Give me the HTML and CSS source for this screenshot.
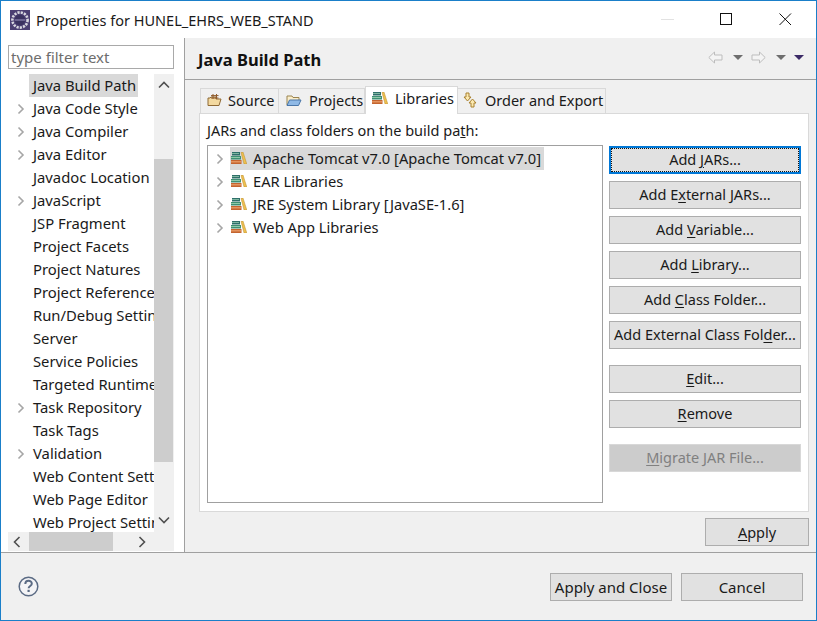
FILE: index.html
```html
<!DOCTYPE html>
<html lang="en">
<head>
    <meta charset="UTF-8">
    <title>Properties for HUNEL_EHRS_WEB_STAND</title>
    <link rel="stylesheet" href="styles.css">
</head>
<body>
    <svg class="defs" width="0" height="0">
        <symbol id="books" viewBox="0 0 16 12">
            <rect x="1" y="0" width="8" height="3.500" fill="#2f6f6a"/>
            <rect x="1" y="1" width="7" height="1" fill="#7fb7a0"/>
            <rect x="0" y="4" width="10" height="3.500" fill="#3f8f73"/>
            <rect x="0" y="5" width="9" height="1" fill="#8fc9a8"/>
            <rect x="0" y="8" width="10.500" height="4" fill="#c4642f"/>
            <rect x="0" y="9.200" width="10" height="1.200" fill="#eba06a"/>
            <path d="M10 .3L12 0 15.800 12H13z" fill="#eec04f" stroke="#b98a2c" stroke-width=".5"/>
        </symbol>
        <symbol id="chev" viewBox="0 0 8 12">
            <path d="M1.500 1.500 L6 6 L1.500 10.500" fill="none" stroke="currentColor" stroke-width="1.600"/>
        </symbol>
    </svg>

    <div class="window">
        <div class="titlebar">
            <svg class="app-icon" width="20" height="20" viewBox="0 0 20 20">
                <rect width="20" height="20" fill="#4b3f72"/>
                <circle cx="10" cy="10" r="7.600" fill="none" stroke="#d8d8e0" stroke-width="2.600" stroke-dasharray="2.200 1.100"/>
                <circle cx="10" cy="10" r="5.200" fill="#3a3260"/>
                <path d="M4.800 10h10.400" stroke="#8d84b0" stroke-width="1.200"/>
            </svg>
            <span class="title-text">Properties for HUNEL_EHRS_WEB_STAND</span>
            <div class="win-buttons">
                <svg width="13" height="13" viewBox="0 0 13 13"><path d="M0 6.500h13" stroke="#e2e2e2"/></svg>
                <svg width="13" height="13" viewBox="0 0 13 13"><rect x=".5" y=".5" width="11" height="11" fill="none" stroke="#111"/></svg>
                <svg width="13" height="13" viewBox="0 0 13 13"><path d="M.5 .5l11.500 11.500M12 .5L.5 12" fill="none" stroke="#111"/></svg>
            </div>
        </div>

        <div class="main">
            <div class="left">
                <input class="filter" type="text" placeholder="type filter text">
                <div class="nav-box">
                    <ul class="nav">
                        <li class="selected"><span class="twisty"></span><span class="nav-label">Java Build Path</span></li>
                        <li><svg class="twisty"><use href="#chev"/></svg><span class="nav-label">Java Code Style</span></li>
                        <li><svg class="twisty"><use href="#chev"/></svg><span class="nav-label">Java Compiler</span></li>
                        <li><svg class="twisty"><use href="#chev"/></svg><span class="nav-label">Java Editor</span></li>
                        <li><span class="twisty"></span><span class="nav-label">Javadoc Location</span></li>
                        <li><svg class="twisty"><use href="#chev"/></svg><span class="nav-label">JavaScript</span></li>
                        <li><span class="twisty"></span><span class="nav-label">JSP Fragment</span></li>
                        <li><span class="twisty"></span><span class="nav-label">Project Facets</span></li>
                        <li><span class="twisty"></span><span class="nav-label">Project Natures</span></li>
                        <li><span class="twisty"></span><span class="nav-label">Project References</span></li>
                        <li><span class="twisty"></span><span class="nav-label">Run/Debug Settings</span></li>
                        <li><span class="twisty"></span><span class="nav-label">Server</span></li>
                        <li><span class="twisty"></span><span class="nav-label">Service Policies</span></li>
                        <li><span class="twisty"></span><span class="nav-label">Targeted Runtimes</span></li>
                        <li><svg class="twisty"><use href="#chev"/></svg><span class="nav-label">Task Repository</span></li>
                        <li><span class="twisty"></span><span class="nav-label">Task Tags</span></li>
                        <li><svg class="twisty"><use href="#chev"/></svg><span class="nav-label">Validation</span></li>
                        <li><span class="twisty"></span><span class="nav-label">Web Content Settings</span></li>
                        <li><span class="twisty"></span><span class="nav-label">Web Page Editor</span></li>
                        <li><span class="twisty"></span><span class="nav-label">Web Project Settings</span></li>
                    </ul>
                    <div class="vscroll">
                        <svg class="v-up" width="12" height="8" viewBox="0 0 12 8"><path d="M1 6.500l5-5 5 5" fill="none" stroke="#505050" stroke-width="1.600"/></svg>
                        <div class="v-thumb"></div>
                        <svg class="v-down" width="12" height="8" viewBox="0 0 12 8"><path d="M1 1.500l5 5 5-5" fill="none" stroke="#505050" stroke-width="1.600"/></svg>
                    </div>
                </div>
                <div class="hscroll">
                    <svg class="h-left" width="8" height="12" viewBox="0 0 8 12"><path d="M6.500 1L1.500 6l5 5" fill="none" stroke="#505050" stroke-width="1.600"/></svg>
                    <div class="h-thumb"></div>
                    <svg class="h-right" width="8" height="12" viewBox="0 0 8 12"><path d="M1.500 1l5 5-5 5" fill="none" stroke="#505050" stroke-width="1.600"/></svg>
                </div>
            </div>

            <div class="right">
                <div class="page-head">
                    <h1>Java Build Path</h1>
                    <div class="history">
                        <svg width="15" height="13" viewBox="0 0 15 13"><path d="M.8 6.500L6.500 1v3h7.500v5H6.500v3z" fill="#f4f4f4" stroke="#bdbdbd"/></svg>
                        <span class="drop"></span>
                        <svg class="hist-fwd" width="15" height="13" viewBox="0 0 15 13"><path d="M14.200 6.500L8.500 1v3H1v5h7.500v3z" fill="#f4f4f4" stroke="#bdbdbd"/></svg>
                        <span class="drop"></span>
                        <span class="drop drop-menu"></span>
                    </div>
                </div>

                <div class="tabs">
                    <div class="tab tab-source">
                        <svg width="16" height="14" viewBox="0 0 16 14">
                            <path d="M1 12.500V5h2l1-1h5v2h5l-2 6.500z" fill="#f3d9a0" stroke="#8f6a35"/>
                            <path d="M6 1v5M9.500 1v5M4 2.600h7.500M4 5h7.500" stroke="#8f5a2a" fill="none"/>
                        </svg>
                        Source
                    </div>
                    <div class="tab tab-projects">
                        <svg width="16" height="14" viewBox="0 0 16 14">
                            <path d="M1 12V3h5l1 1.500h6V7" fill="#fbeecb" stroke="#9a8450"/>
                            <path d="M1 12.500L3.500 7h11.500L12.500 12.500z" fill="#8fb9e6" stroke="#4a76a8"/>
                        </svg>
                        Projects
                    </div>
                    <div class="tab tab-active tab-libs">
                        <svg width="16" height="12"><use href="#books"/></svg>
                        Libraries
                    </div>
                    <div class="tab tab-order">
                        <svg width="16" height="16" viewBox="0 0 16 16">
                            <path d="M3 1h3v4h2L4.500 9 1 5h2z" fill="#fbe9b0" stroke="#a9812f"/>
                            <path d="M11 15h-3v-4H6l3.500-4 3.500 4H11z" fill="#fbe9b0" stroke="#a9812f"/>
                        </svg>
                        Order and Export
                    </div>
                </div>

                <div class="tab-panel">
                    <div class="panel-label">JARs and class folders on the build pa<u>t</u>h:</div>
                    <div class="panel-body">
                        <div class="lib-tree">
                            <div class="lib-row selected-row">
                                <svg class="lib-twisty"><use href="#chev"/></svg>
                                <span class="lib-sel"><svg width="16" height="12"><use href="#books"/></svg>Apache Tomcat v7.0 [Apache Tomcat v7.0]</span>
                            </div>
                            <div class="lib-row">
                                <svg class="lib-twisty"><use href="#chev"/></svg>
                                <span class="lib-sel"><svg width="16" height="12"><use href="#books"/></svg>EAR Libraries</span>
                            </div>
                            <div class="lib-row">
                                <svg class="lib-twisty"><use href="#chev"/></svg>
                                <span class="lib-sel"><svg width="16" height="12"><use href="#books"/></svg>JRE System Library [JavaSE-1.6]</span>
                            </div>
                            <div class="lib-row">
                                <svg class="lib-twisty"><use href="#chev"/></svg>
                                <span class="lib-sel"><svg width="16" height="12"><use href="#books"/></svg>Web App Libraries</span>
                            </div>
                        </div>
                        <div class="side-buttons">
                            <button class="btn btn-focus">Add <u>J</u>ARs...</button>
                            <button class="btn">Add E<u>x</u>ternal JARs...</button>
                            <button class="btn">Add <u>V</u>ariable...</button>
                            <button class="btn">Add <u>L</u>ibrary...</button>
                            <button class="btn">Add <u>C</u>lass Folder...</button>
                            <button class="btn">Add External Class Fol<u>d</u>er...</button>
                            <button class="btn btn-break"><u>E</u>dit...</button>
                            <button class="btn"><u>R</u>emove</button>
                            <button class="btn btn-break btn-disabled"><u>M</u>igrate JAR File...</button>
                        </div>
                    </div>
                </div>

                <div class="apply-row">
                    <button class="btn btn-apply"><u>A</u>pply</button>
                </div>
            </div>
        </div>

        <div class="footer">
            <svg class="help" width="21" height="21" viewBox="0 0 21 21">
                <circle cx="10.500" cy="10.500" r="9.300" fill="#f4f4f6" stroke="#5b6b84" stroke-width="1.500"/>
                <path d="M7.300 8c0-4.200 6.500-4.200 6.500-.3 0 2.300-3.200 2.300-3.200 4.600" fill="none" stroke="#5b6b84" stroke-width="2"/>
                <rect x="9.500" y="13.800" width="2.200" height="2.200" fill="#5b6b84"/>
            </svg>
            <div class="footer-buttons">
                <button class="btn btn-close">Apply and Close</button>
                <button class="btn btn-close">Cancel</button>
            </div>
        </div>
    </div>
</body>
</html>
```

FILE: styles.css
```css
* {
    box-sizing: border-box;
}
html, body {
    margin: 0;
    padding: 0;
}
body {
    width: 817px;
    height: 621px;
    overflow: hidden;
    font-family: "Noto Sans", "Open Sans", Arial, sans-serif;
    font-size: 14.5px;
    color: #1a1a1a;
}
.defs {
    display: block;
    height: 0;
}
.window {
    width: 817px;
    height: 621px;
    display: flex;
    flex-direction: column;
    background: #f0f0f0;
    border: 1px solid #1a7fc9;
}

/* title bar */
.titlebar {
    height: 37px;
    flex: none;
    display: flex;
    align-items: center;
    background: #fff;
    padding-left: 9px;
}
.app-icon {
    margin-right: 6px;
    flex: none;
}
.title-text {
    font-size: 14.5px;
    flex: 1;
}
.win-buttons {
    display: flex;
    gap: 46px;
    padding-right: 24px;
}

/* left tree */
.main {
    height: 515px;
    flex: none;
    display: flex;
    min-height: 0;
    border-bottom: 1px solid #a0a0a0;
}
.left {
    width: 184px;
    flex: none;
    background: #fff;
    border-right: 1px solid #a0a0a0;
    padding: 7px 9px 0 7px;
}
.filter {
    display: block;
    width: 166px;
    height: 24px;
    border: 1px solid #a9a9a9;
    padding: 0 2px;
    font: inherit;
    font-size: 15px;
    outline: none;
}
.filter::placeholder {
    color: #6d6d6d;
    opacity: 1;
}
.nav-box {
    display: flex;
    margin-top: 5px;
    height: 458px;
}
.nav {
    list-style: none;
    margin: 0;
    padding: 0;
    width: 146px;
    overflow: hidden;
    font-size: 14.8px;
}
.nav li {
    height: 23px;
    display: flex;
    align-items: center;
    white-space: nowrap;
    line-height: 23px;
}
.twisty {
    width: 8px;
    height: 12px;
    flex: none;
    margin: 0 9px 0 9px;
    color: #a6a6a6;
}
.nav-label {
    padding: 0 2px 0 4px;
    margin-left: -5px;
}
.nav li.selected .nav-label {
    background: #d9d9d9;
}
.vscroll {
    width: 20px;
    background: #f0f0f0;
    display: flex;
    flex-direction: column;
    align-items: center;
    padding-top: 7px;
}
.v-thumb {
    width: 19px;
    align-self: flex-start;
    height: 303px;
    margin-top: 70px;
    background: #cdcdcd;
}
.v-down {
    margin-top: 54px;
}
.hscroll {
    height: 19px;
    width: 166px;
    display: flex;
    align-items: center;
    background: #f0f0f0;
}
.h-left {
    margin-left: 5px;
}
.h-thumb {
    width: 84px;
    height: 19px;
    margin-left: 8px;
    background: #cdcdcd;
}
.h-right {
    margin-left: 25px;
}

/* right side */
.right {
    flex: 1;
    min-width: 0;
    display: flex;
    flex-direction: column;
}
.page-head {
    height: 42px;
    flex: none;
    display: flex;
    align-items: center;
    justify-content: space-between;
    border-bottom: 1px solid #a0a0a0;
    padding: 1px 12px 0 13px;
}
.page-head h1 {
    margin: 0;
    font-size: 16.500px;
    font-weight: 700;
    color: #111;
}
.history {
    display: flex;
    align-items: center;
    padding-bottom: 3px;
}
.hist-fwd {
    margin-left: 8px;
}
.drop {
    width: 0;
    height: 0;
    margin-left: 10px;
    border-left: 5px solid transparent;
    border-right: 5px solid transparent;
    border-top: 5px solid #6e6e6e;
}
.drop-menu {
    margin-left: 8px;
    border-top-color: #3b2a66;
}

/* tabs */
.tabs {
    display: flex;
    align-items: flex-end;
    height: 33px;
    flex: none;
    padding-left: 15px;
}
.tab {
    height: 25px;
    display: flex;
    align-items: center;
    border: 1px solid #d9d9d9;
    border-bottom: none;
    border-left: none;
    padding-bottom: 2px;
    white-space: nowrap;
}
.tab-source {
    width: 79px;
    gap: 5px;
    padding-left: 6px;
    border-left: 1px solid #d9d9d9;
}
.tab-projects {
    width: 86px;
    gap: 7px;
    padding-left: 7px;
}
.tab-libs {
    width: 93px;
    gap: 7px;
    padding-left: 6px;
}
.tab-order {
    width: 148px;
    gap: 6px;
    padding-left: 5px;
}
.tab-active {
    height: 28px;
    background: #fff;
    padding-bottom: 5px;
    position: relative;
    margin-bottom: -1px;
    z-index: 1;
    border-left: 1px solid #d9d9d9;
}
.tab-panel {
    width: 610px;
    height: 399px;
    margin-left: 14px;
    flex: none;
    background: #fff;
    border: 1px solid #d9d9d9;
    padding: 6px 7px 0 7px;
}
.panel-label {
    height: 25px;
    line-height: 20px;
}
.panel-body {
    display: flex;
    gap: 6px;
    align-items: flex-start;
}
.lib-tree {
    width: 396px;
    height: 358px;
    border: 1px solid #a0a0a0;
    padding-top: 1px;
    font-size: 14.7px;
}
.lib-row {
    height: 23px;
    display: flex;
    align-items: center;
    white-space: nowrap;
}
.lib-twisty {
    width: 8px;
    height: 12px;
    margin: 0 6px 0 8px;
    color: #a6a6a6;
    flex: none;
}
.lib-sel {
    height: 23px;
    display: flex;
    align-items: center;
    gap: 6px;
    padding: 0 3px 2px 1px;
}
.selected-row .lib-sel {
    background: #d9d9d9;
}

/* buttons */
.side-buttons {
    width: 192px;
    margin-top: 1px;
    display: flex;
    flex-direction: column;
    gap: 7px;
}
.side-buttons .btn {
    padding-bottom: 2px;
}
.btn {
    display: block;
    height: 28px;
    padding: 0;
    font: inherit;
    color: #1a1a1a;
    background: #e1e1e1;
    border: 1px solid #adadad;
    white-space: nowrap;
}
.btn u {
    text-underline-offset: 2px;
}
.btn-focus {
    border: 2px solid #0078d7;
    outline: 1px dotted #111;
    outline-offset: -3px;
}
.btn-break {
    margin-top: 9px;
}
.btn-disabled {
    background: #cccccc;
    border-color: #d8d8d8;
    color: #808080;
}
.apply-row {
    display: flex;
    justify-content: flex-end;
    padding: 6px 7px 0 0;
}
.btn-apply {
    width: 104px;
}

/* footer */
.footer {
    flex: 1;
    display: flex;
    align-items: center;
    justify-content: space-between;
    padding: 0 13px 0 17px;
}
.footer-buttons {
    display: flex;
    gap: 9px;
}
.btn-close {
    width: 122px;
    font-size: 15px;
}
```
